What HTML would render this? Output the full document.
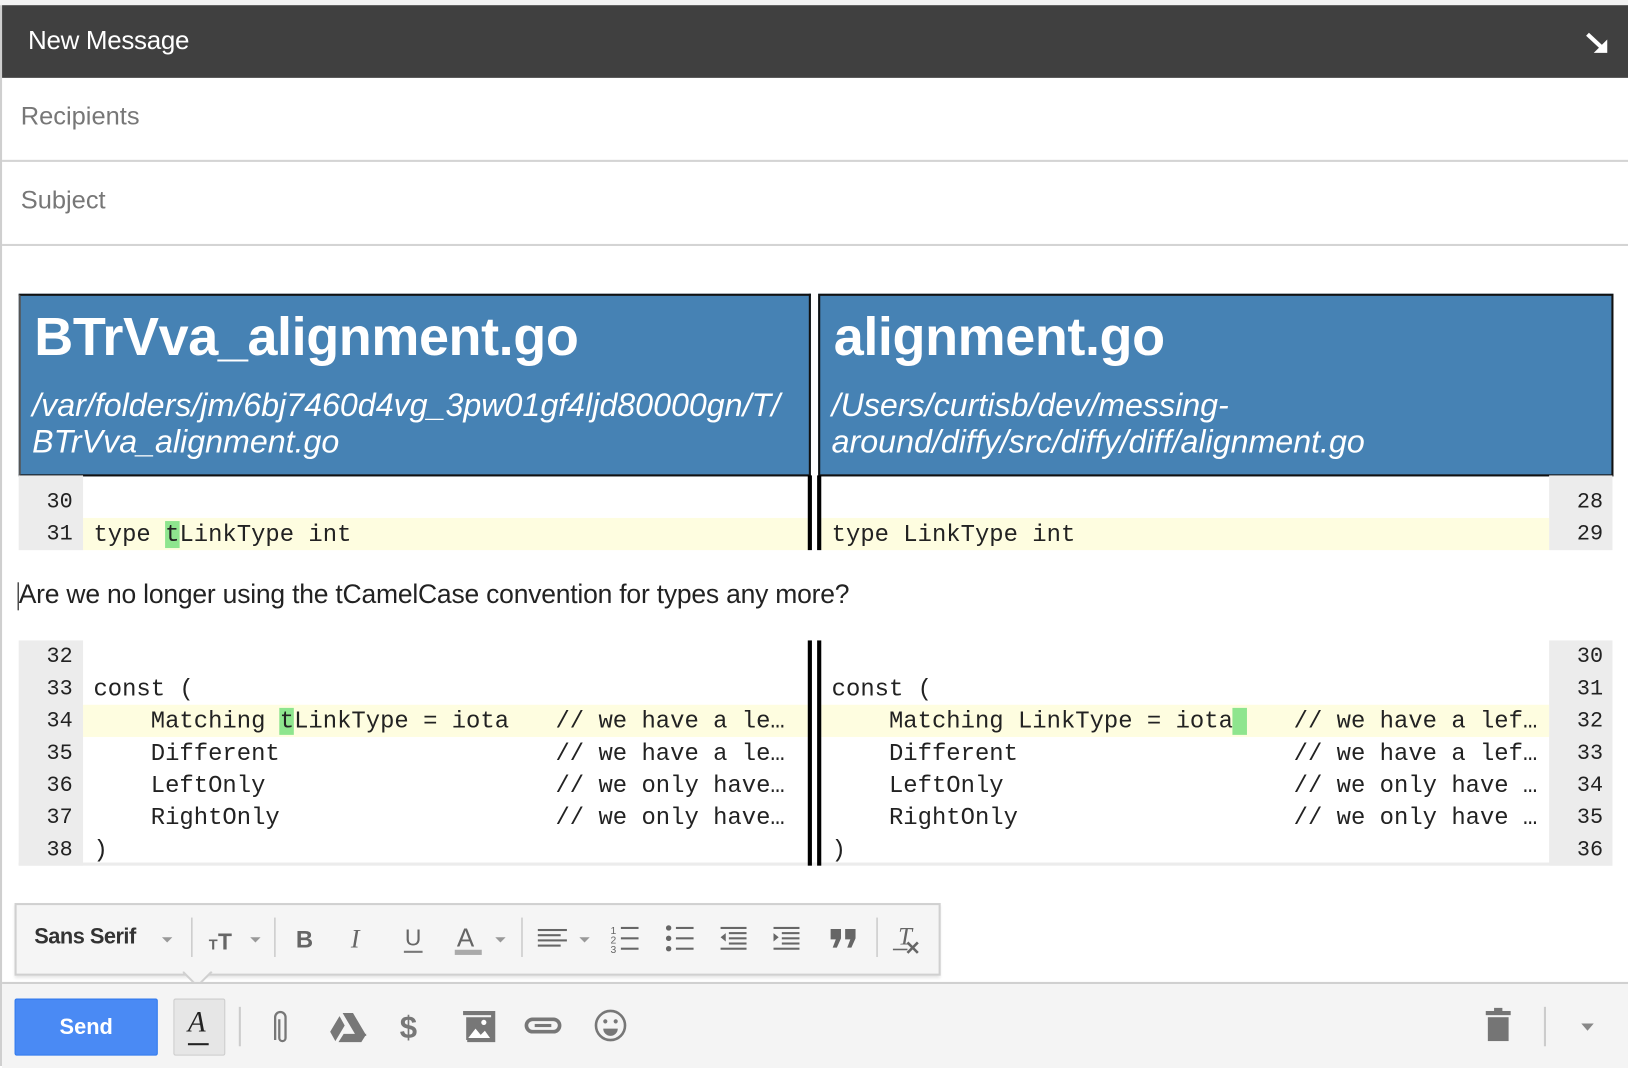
<!DOCTYPE html>
<html><head><meta charset="utf-8"><style>
html,body{margin:0;padding:0;width:1628px;height:1066px;overflow:hidden;background:#fff}
#w{position:absolute;left:0;top:0;width:1568px;height:1027px;transform:scale(1.03827,1.03797);transform-origin:0 0;font-family:"Liberation Sans",sans-serif}
.a{position:absolute}
.mono{font-family:"Liberation Mono",monospace;font-size:23px;white-space:pre;color:#222;line-height:31px}
.num{font-family:"Liberation Mono",monospace;font-size:21px;color:#222;line-height:31px;text-align:right}
.hl{background:#fefde0}
.g{background:#8ee58e}
.ic{position:absolute}
</style></head><body><div id="w">
<div class="a" style="left:0;top:0;width:1568px;height:5px;background:#f2f2f2"></div>
<div class="a" style="left:0;top:5px;width:2px;height:1022px;background:#cfcfcf"></div>
<div class="a" style="left:2px;top:5px;width:1566px;height:70px;background:#404040"></div>
<div class="a" style="left:27px;top:25px;color:#fff;font-size:25px;letter-spacing:-0.3px">New Message</div>
<svg class="ic" style="left:1526px;top:30px" width="26" height="24" viewBox="0 0 26 24"><path d="M3 3 L18 17" stroke="#fff" stroke-width="4"/><path d="M9 21 L22 21 L22 8 Z" fill="#fff"/></svg>
<div class="a" style="left:20px;top:99px;color:#777;font-size:24.5px">Recipients</div>
<div class="a" style="left:2px;top:154px;width:1566px;height:2px;background:#d4d4d4"></div>
<div class="a" style="left:20px;top:180px;color:#777;font-size:24.5px">Subject</div>
<div class="a" style="left:2px;top:235px;width:1566px;height:2px;background:#d4d4d4"></div>

<div class="a" style="left:18px;top:283px;width:759px;height:172px;background:#4682b4;border:2px solid #111;border-left-color:#555"></div>
<div class="a" style="left:788px;top:283px;width:762px;height:172px;background:#4682b4;border:2px solid #111"></div>
<div class="a" style="left:33px;top:295px;color:#fff;font-weight:bold;font-size:52px;letter-spacing:-0.4px">BTrVva_alignment.go</div>
<div class="a" style="left:31px;top:373px;color:#fff;font-style:italic;font-size:31px;letter-spacing:0;line-height:35px">/var/folders/jm/6bj7460d4vg_3pw01gf4ljd80000gn/T/<br>BTrVva_alignment.go</div>
<div class="a" style="left:803px;top:295px;color:#fff;font-weight:bold;font-size:52px;letter-spacing:-0.4px">alignment.go</div>
<div class="a" style="left:801px;top:373px;color:#fff;font-style:italic;font-size:31px;letter-spacing:0;line-height:35px">/Users/curtisb/dev/messing-<br>around/diffy/src/diffy/diff/alignment.go</div>

<div class="a" style="left:18px;top:458px;width:62px;height:72px;background:#ececec"></div>
<div class="a" style="left:1492px;top:458px;width:61px;height:72px;background:#ececec"></div>
<div class="a hl" style="left:80px;top:499px;width:698px;height:31px"></div>
<div class="a hl" style="left:791px;top:499px;width:701px;height:31px"></div>
<div class="a num" style="left:18px;top:469px;width:52px">30</div>
<div class="a num" style="left:18px;top:500px;width:52px">31</div>
<div class="a num" style="left:1492px;top:469px;width:52px">28</div>
<div class="a num" style="left:1492px;top:500px;width:52px">29</div>
<div class="a mono" style="left:90px;top:500px">type <span class="g">t</span>LinkType int</div>
<div class="a mono" style="left:801px;top:500px">type LinkType int</div>
<div class="a" style="left:778px;top:458px;width:4px;height:72px;background:#000"></div>
<div class="a" style="left:787px;top:458px;width:4px;height:72px;background:#000"></div>

<div class="a" style="left:17px;top:561px;width:1px;height:27px;background:#000"></div>
<div class="a" style="left:18px;top:559px;font-size:25.5px;color:#222;letter-spacing:-0.2px">Are we no longer using the tCamelCase convention for types any more?</div>

<div class="a" style="left:18px;top:617px;width:62px;height:217px;background:#ececec"></div>
<div class="a" style="left:1492px;top:617px;width:61px;height:217px;background:#ececec"></div>
<div class="a" style="left:18px;top:831px;width:1535px;height:3px;background:#ececec"></div>
<div class="a hl" style="left:80px;top:679px;width:698px;height:31px"></div>
<div class="a hl" style="left:791px;top:679px;width:701px;height:31px"></div>
<div class="a num" style="left:18px;top:618px;width:52px">32<br>33<br>34<br>35<br>36<br>37<br>38</div>
<div class="a num" style="left:1492px;top:618px;width:52px">30<br>31<br>32<br>33<br>34<br>35<br>36</div>
<div class="a mono" style="left:90px;top:618px">
const (
    Matching <span class="g">t</span>LinkType = iota
    Different
    LeftOnly
    RightOnly
)</div>
<div class="a mono" style="left:535px;top:680px">// we have a le…
// we have a le…
// we only have…
// we only have…</div>
<div class="a mono" style="left:801px;top:618px">
const (
    Matching LinkType = iota<span class="g"> </span>
    Different
    LeftOnly
    RightOnly
)</div>
<div class="a mono" style="left:1246px;top:680px">// we have a lef…
// we have a lef…
// we only have …
// we only have …</div>
<div class="a" style="left:778px;top:617px;width:4px;height:217px;background:#000"></div>
<div class="a" style="left:787px;top:617px;width:4px;height:217px;background:#000"></div>

<div class="a" style="left:14px;top:870px;width:888px;height:66px;background:#f5f5f5;border:2px solid #d0d0d0;box-shadow:0 2px 3px rgba(0,0,0,.1)"></div>
<svg class="ic" style="left:176px;top:936px" width="30" height="16"><path d="M0 0 L14 14 L28 0" fill="#f5f5f5" stroke="#d0d0d0" stroke-width="2"/></svg>
<div class="a" style="left:33px;top:891px;font-size:21px;font-weight:bold;color:#333;letter-spacing:-0.5px">Sans Serif</div>
<svg class="ic" style="left:14px;top:870px" width="890" height="68" fill="#777">
<path d="M142 33 h10 l-5 5z M227 33 h10 l-5 5z M463 33 h10 l-5 5z M544 33 h10 l-5 5z" fill="#999"/>
<rect x="170" y="14" width="1.5" height="38" fill="#ccc"/><rect x="250" y="14" width="1.5" height="38" fill="#ccc"/><rect x="488" y="14" width="1.5" height="38" fill="#ccc"/><rect x="830" y="14" width="1.5" height="38" fill="#ccc"/>
<text x="187" y="45" font-family="Liberation Sans" font-weight="bold" font-size="14" fill="#666">T</text><text x="196" y="45" font-family="Liberation Sans" font-weight="bold" font-size="22" fill="#666">T</text>
<text x="271" y="43" font-family="Liberation Sans" font-weight="bold" font-size="23" fill="#666">B</text>
<text x="324" y="43" font-family="Liberation Serif" font-style="italic" font-size="25" fill="#666">I</text>
<text x="376" y="41" font-family="Liberation Sans" font-size="22" fill="#666">U</text><rect x="375" y="46" width="18" height="2"/>
<text x="426" y="42" font-family="Liberation Sans" font-size="25" fill="#666">A</text><rect x="424" y="45" width="26" height="5" fill="#aaa"/>
<g fill="#666"><rect x="504" y="25" width="28" height="2"/><rect x="504" y="30" width="22" height="2"/><rect x="504" y="35" width="28" height="2"/><rect x="504" y="40" width="22" height="2"/>
<text x="574" y="30" font-size="10" font-family="Liberation Sans">1</text><text x="574" y="39" font-size="10" font-family="Liberation Sans">2</text><text x="574" y="48" font-size="10" font-family="Liberation Sans">3</text>
<rect x="584" y="23" width="17" height="2"/><rect x="584" y="33" width="17" height="2"/><rect x="584" y="43" width="17" height="2"/>
<circle cx="630" cy="24" r="2.6"/><circle cx="630" cy="34" r="2.6"/><circle cx="630" cy="44" r="2.6"/><rect x="637" y="23" width="17" height="2"/><rect x="637" y="33" width="17" height="2"/><rect x="637" y="43" width="17" height="2"/>
<rect x="680" y="23" width="25" height="2"/><rect x="688" y="28" width="17" height="2"/><rect x="688" y="33" width="17" height="2"/><rect x="688" y="38" width="17" height="2"/><rect x="680" y="43" width="25" height="2"/><path d="M685 29 v8 l-5 -4z"/>
<rect x="731" y="23" width="25" height="2"/><rect x="739" y="28" width="17" height="2"/><rect x="739" y="33" width="17" height="2"/><rect x="739" y="38" width="17" height="2"/><rect x="731" y="43" width="25" height="2"/><path d="M731 29 v8 l5 -4z"/>
<path d="M786 25 h10 v9 l-4 9 h-4 l3 -8 h-5z M800 25 h10 v9 l-4 9 h-4 l3 -8 h-5z"/>
<text x="851" y="40" font-family="Liberation Serif" font-style="italic" font-size="24">T</text><rect x="846" y="44" width="14" height="1.5"/><path d="M860 38 l10 10 M870 38 l-10 10" stroke="#666" stroke-width="2.5"/></g>
</svg>

<div class="a" style="left:2px;top:946px;width:1566px;height:81px;background:#f4f4f4;border-top:2px solid #d0d0d0"></div>
<div class="a" style="left:14px;top:962px;width:136px;height:53px;background:#4a8af4;border:1px solid #3079ed;border-radius:2px;color:#fff;font-weight:bold;font-size:21px;text-align:center;line-height:53px">Send</div>
<div class="a" style="left:167px;top:962px;width:48px;height:53px;background:#e6e6e6;border:1px solid #ccc;border-radius:2px"></div>
<div class="a" style="left:181px;top:970px;font-family:'Liberation Serif',serif;font-style:italic;font-size:28px;color:#222">A</div>
<div class="a" style="left:181px;top:1005px;width:20px;height:2px;background:#222"></div>
<div class="a" style="left:230px;top:970px;width:2px;height:38px;background:#ccc"></div>
<svg class="ic" style="left:255px;top:968px" width="370" height="44" fill="#777">
<path d="M10 32 V10 a5 5 0 0 1 10 0 V30 a3 3 0 0 1 -6 0 V12" fill="none" stroke="#777" stroke-width="2.2" transform="translate(0,2)"/>
<path d="M75 8 h10 l13 22 h-10z M72 11 l5 9 l-9 15 l-5 -9z M71 36 l5 -8 h22 l-5 8z"/>
<text x="130" y="32" font-family="Liberation Sans" font-weight="bold" font-size="30">$</text>
<path d="M191 6 h31 v30 h-27 v-4 h23 v-22 h-27z M194 12 h24 v22 h-24z"/><path d="M196 32 l7 -9 l5 6 l4 -4 l5 7z" fill="#fff"/><circle cx="211" cy="17" r="2.5" fill="#fff"/>
<rect x="252" y="14" width="32" height="12" rx="6" fill="none" stroke="#777" stroke-width="3.5"/><rect x="260" y="18.5" width="16" height="3"/>
<circle cx="333" cy="20" r="14" fill="none" stroke="#777" stroke-width="2.5"/><circle cx="328" cy="16" r="2"/><circle cx="338" cy="16" r="2"/><path d="M326 23 h14 a7 7 0 0 1 -14 0z"/>
</svg>
<svg class="ic" style="left:1430px;top:970px" width="30" height="36" fill="#757575"><rect x="1" y="4" width="24" height="4"/><rect x="9" y="1" width="8" height="4"/><rect x="3" y="10" width="20" height="23"/></svg>
<div class="a" style="left:1487px;top:970px;width:2px;height:38px;background:#ccc"></div>
<svg class="ic" style="left:1522px;top:985px" width="16" height="10"><path d="M1 1 h12 l-6 7z" fill="#888"/></svg>
</div></body></html>
